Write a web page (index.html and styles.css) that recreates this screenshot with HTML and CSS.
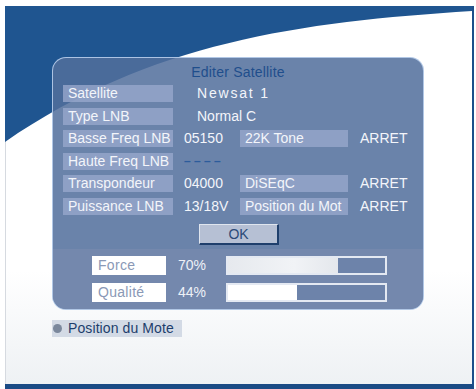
FILE: index.html
```html
<!DOCTYPE html>
<html lang="fr">
<head>
<meta charset="utf-8">
<title>Editer Satellite</title>
<link rel="stylesheet" href="styles.css">
</head>
<body>
<div class="screen">
  <div class="panel">
    <div class="title">Editer Satellite</div>
    <div class="rows">
      <span class="lbl">Satellite</span><span class="val span spaced">Newsat 1</span>
      <span class="lbl">Type LNB</span><span class="val span">Normal C</span>
      <span class="lbl">Basse Freq LNB</span><span class="val">05150</span><span class="lbl">22K Tone</span><span class="val end">ARRET</span>
      <span class="lbl">Haute Freq LNB</span><span class="val dash">– – – –</span><span class="empty"></span><span class="empty"></span>
      <span class="lbl">Transpondeur</span><span class="val">04000</span><span class="lbl">DiSEqC</span><span class="val end">ARRET</span>
      <span class="lbl">Puissance LNB</span><span class="val">13/18V</span><span class="lbl">Position du Mot</span><span class="val end">ARRET</span>
    </div>
    <div class="ok-wrap"><span class="ok">OK</span></div>
    <div class="signal">
      <div class="sig-row">
        <span class="sig-lbl">Force</span><span class="pct">70%</span>
        <div class="bar"><div class="fill soft" style="width:70%"></div></div>
      </div>
      <div class="sig-row">
        <span class="sig-lbl">Qualité</span><span class="pct">44%</span>
        <div class="bar"><div class="fill" style="width:44%"></div></div>
      </div>
    </div>
  </div>
  <div class="hint"><span class="dot"></span>Position du Mote</div>
</div>
</body>
</html>
```
FILE: styles.css
```css
html, body {
  margin: 0;
  padding: 0;
  background: #ffffff;
}
body {
  width: 476px;
  height: 389px;
  overflow: hidden;
  font-family: "Liberation Sans", Arial, sans-serif;
}
.screen {
  box-sizing: border-box;
  width: 469px;
  height: 383px;
  margin: 6px 0 0 5px;
  border-right: 2px solid #1d4f8b;
  border-bottom: 5px solid #1b4b85;
  padding: 51px 0 0 47px;
  background-color: #ffffff;
  background-image:
    url("data:image/svg+xml;utf8,<svg xmlns='http://www.w3.org/2000/svg' viewBox='0 0 467 378' preserveAspectRatio='none'><rect x='0' y='130' width='1' height='248' fill='%23d6dae0'/><path d='M0,0 H467 V5 C295,16 145,36 0,136 Z' fill='%231f5590'/></svg>"),
    linear-gradient(#ffffff 70%, #eef1f4);
  background-size: 100% 100%, 100% 100%;
  background-repeat: no-repeat;
}
.panel {
  box-sizing: border-box;
  width: 372px;
  border: 1px solid rgba(190, 212, 240, 0.85);
  border-radius: 14px;
  background: rgba(82, 111, 156, 0.86);
  padding-top: 6px;
  overflow: hidden;
}
.title {
  text-align: center;
  color: #1f4e8c;
  font-size: 14px;
  line-height: 16px;
  letter-spacing: 0.2px;
}
.rows {
  display: grid;
  grid-template-columns: 110px 67px 108px 1fr;
  grid-auto-rows: 17px;
  row-gap: 5.6px;
  margin: 5px 0 0 10px;
  font-size: 14px;
  line-height: 17px;
  color: #f3f5fa;
}
.lbl {
  background: rgba(150, 166, 202, 0.82);
  padding-left: 5px;
  white-space: nowrap;
  overflow: visible;
}
.val {
  padding-left: 11px;
  white-space: nowrap;
}
.val.span {
  grid-column: 2 / 5;
  padding-left: 24px;
}
.val.spaced {
  letter-spacing: 1.8px;
}
.val.end {
  padding-left: 12px;
}
.val.dash {
  color: #2c5c9c;
  font-size: 12px;
  font-weight: bold;
}
.ok-wrap {
  display: flex;
  justify-content: center;
  margin-top: 9px;
  padding-left: 2px;
}
.ok {
  box-sizing: border-box;
  width: 80px;
  height: 21px;
  background: #b6c0d4;
  border-top: 1px solid #dfe5ee;
  border-left: 1px solid #dfe5ee;
  border-right: 2px solid #1f3f6c;
  border-bottom: 2px solid #1f3f6c;
  color: #2b4a78;
  font-size: 14px;
  line-height: 18px;
  text-align: center;
}
.signal {
  margin-top: 4px;
  background: #7488ad;
  padding: 7px 0 7px 39px;
  display: flex;
  flex-direction: column;
  gap: 8px;
}
.sig-row {
  display: flex;
  align-items: center;
  height: 19px;
}
.sig-lbl {
  box-sizing: border-box;
  width: 74px;
  height: 19px;
  background: #ffffff;
  color: #8a99b6;
  font-size: 14px;
  line-height: 19px;
  padding-left: 6px;
  letter-spacing: 0.3px;
}
.pct {
  width: 60px;
  padding-left: 12px;
  box-sizing: border-box;
  color: #eef1f7;
  font-size: 14px;
  line-height: 19px;
}
.bar {
  box-sizing: border-box;
  width: 161px;
  height: 19px;
  border: 2px solid #e4e9f2;
  background: #6d83aa;
}
.fill {
  height: 100%;
  background: #ffffff;
}
.fill.soft {
  background: linear-gradient(90deg, #e6e9ee, #f1f3f6 60%, #e4e7ec);
}
.hint {
  display: inline-flex;
  align-items: center;
  margin-top: 10px;
  height: 17px;
  padding: 0 8px 0 1px;
  background: #d3dae5;
  color: #1d3e6c;
  font-size: 14px;
  line-height: 17px;
  letter-spacing: 0.1px;
}
.dot {
  width: 9px;
  height: 9px;
  border-radius: 50%;
  background: #7b889c;
  margin-right: 6px;
}
```
